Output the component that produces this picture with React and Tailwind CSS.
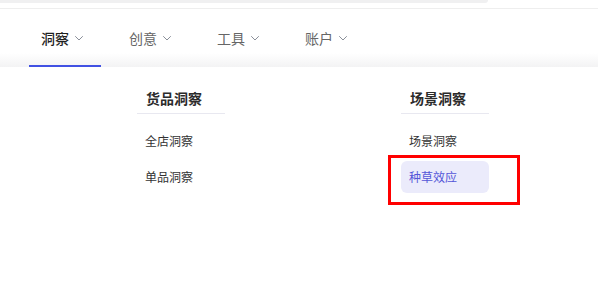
import React from 'react';

const navItems = [
  { label: '洞察', active: true },
  { label: '创意' },
  { label: '工具' },
  { label: '账户' },
];

const columns = [
  { title: '货品洞察', items: ['全店洞察', '单品洞察'] },
  { title: '场景洞察', items: ['场景洞察', '种草效应'], selected: '种草效应' },
];

function Chevron() {
  return (
    <svg width="12" height="12" viewBox="0 0 12 12" fill="none" className="shrink-0">
      <path d="M2.5 4.5 L6 8 L9.5 4.5" stroke="#8a8f99" strokeWidth="1" strokeLinecap="round" strokeLinejoin="round" />
    </svg>
  );
}

export default function App() {
  return (
    <div
      className="relative w-[598px] h-[294px] bg-white overflow-hidden"
      style={{ fontFamily: '"Noto Sans CJK SC", "Noto Sans", sans-serif' }}
    >
      {/* top search strip remnant */}
      <div className="h-[3px] w-[488px] bg-[#f0f0f1] rounded-br-[6px]" />
      <div className="mt-[5px] h-px bg-[#eeeeee]" />

      {/* nav bar */}
      <div className="h-[58px] flex pl-[29px] gap-4 bg-[linear-gradient(180deg,#ffffff_76%,#f3f3f4_100%)]">
        {navItems.map((item) => (
          <div key={item.label} className="relative w-[72px] h-full flex items-center pl-3 gap-[4px]">
            <span
              className={
                item.active
                  ? 'text-[14px] leading-none text-[#1f1f1f] font-medium'
                  : 'text-[14px] leading-none text-[#666666]'
              }
            >
              {item.label}
            </span>
            <Chevron />
            {item.active && (
              <div className="absolute left-0 right-0 bottom-0 h-[2px] bg-[#4152e3]" />
            )}
          </div>
        ))}
      </div>

      {/* dropdown panel */}
      <div className="flex pl-[137px] pt-[15px] gap-[176px]">
        {columns.map((col) => (
          <div key={col.title} className="w-[88px]">
            <div className="h-8 flex items-center pl-[9px] border-b border-[#e8e8f0] text-[14px] font-bold text-[#2b2b2b] leading-none">
              {col.title}
            </div>
            <div className="mt-[11px] flex flex-col gap-1">
              {col.items.map((it) =>
                it === col.selected ? (
                  <div
                    key={it}
                    className="h-8 flex items-center pl-2 rounded-[6px] bg-[#ebebfb] text-[12px] text-[#5456d8] leading-none"
                  >
                    {it}
                  </div>
                ) : (
                  <div key={it} className="h-8 flex items-center pl-2 text-[12px] text-[#333333] leading-none">
                    {it}
                  </div>
                )
              )}
            </div>
          </div>
        ))}
      </div>

      {/* annotation box */}
      <div className="absolute left-[388px] top-[155px] w-[132px] h-[50px] border-[3px] border-[#ff0000]" />
    </div>
  );
}
